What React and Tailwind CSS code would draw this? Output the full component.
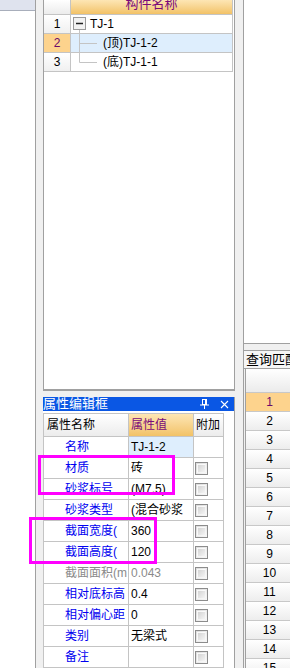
import React from 'react';

// 构件列表
const treeRows = [
  { no: 1, text: 'TJ-1', kind: 'root' },
  { no: 2, text: '(顶)TJ-1-2', kind: 'mid', active: true },
  { no: 3, text: '(底)TJ-1-1', kind: 'last' },
];

// 属性
const props = [
  { label: '名称', value: 'TJ-1-2', check: false, active: true },
  { label: '材质', value: '砖', check: true },
  { label: '砂浆标号', value: '(M7.5)', check: true },
  { label: '砂浆类型', value: '(混合砂浆', check: true },
  { label: '截面宽度(', value: '360', check: true },
  { label: '截面高度(', value: '120', check: true },
  { label: '截面面积(m', value: '0.043', check: true, muted: true },
  { label: '相对底标高', value: '0.4', check: true },
  { label: '相对偏心距', value: '0', check: true },
  { label: '类别', value: '无梁式', check: true },
  { label: '备注', value: '', check: true },
];

const matchRows = [1, 2, 3, 4, 5, 6, 7, 8, 9, 10, 11, 12, 13, 14, 15];

const TreeLine = ({ kind }) => {
  if (kind === 'root') {
    return (
      <svg width="13" height="18" viewBox="0 0 13 18" className="shrink-0">
        <line x1="6.5" y1="15" x2="6.5" y2="18" stroke="#c4c4c4" />
        <rect x="0.5" y="2.5" width="12" height="12" fill="#f2f2f2" stroke="#9a9a9a" />
        <line x1="3" y1="8.5" x2="10" y2="8.5" stroke="#222" strokeWidth="1.5" />
      </svg>
    );
  }
  return (
    <svg width="30" height="18" viewBox="0 0 30 18" className="shrink-0">
      <line x1="6.5" y1="0" x2="6.5" y2={kind === 'last' ? 9.5 : 18} stroke="#c4c4c4" />
      <line x1="6.5" y1="9.5" x2="24" y2="9.5" stroke="#c4c4c4" />
    </svg>
  );
};

const CheckBox = () => (
  <div className="w-[13px] h-[13px] border border-[#8c8c8c] bg-linear-to-br from-[#dcdcdc] to-[#f8f8f8] p-[1px]">
    <div className="w-full h-full border border-white/70 bg-linear-to-br from-[#d4d4d4] to-[#f4f4f4]" />
  </div>
);

const App = () => {
  return (
    <div className="relative flex w-[290px] h-[668px] overflow-hidden bg-white text-[12px] text-black font-['Liberation_Sans','Noto_Sans_CJK_SC',sans-serif]">
      {/* 左侧面板 */}
      <div className="w-[36px] shrink-0 flex flex-col border-r border-[#a0a0a0]">
        <div className="h-[11px] bg-[#dfe3ee] border-b border-[#a8aebb]" />
        <div className="flex-1 bg-white" />
      </div>
      <div className="w-[7px] shrink-0 bg-[#f0f0f0]" />

      {/* 中间 */}
      <div className="w-[192px] shrink-0 flex flex-col">
        <div className="h-[391px] shrink-0 bg-white border-l border-r border-b-2 border-[#a0a0a0]">
          <div className="w-[189px]">
            <div className="flex h-[15px] border-b border-[#c4c4c4]">
              <div className="w-[27px] border-r border-[#c4c4c4] bg-linear-to-b from-white to-[#ececec]" />
              <div className="w-[162px] border-r border-[#c4c4c4] bg-linear-to-b from-[#fde6b4] to-[#f2c266] flex items-end justify-center overflow-hidden">
                <span className="text-[13px] leading-[13px] text-[#7a0a7a] mb-[4px]">构件名称</span>
              </div>
            </div>
            {treeRows.map((r) => (
              <div key={r.no} className="flex h-[19px] border-b border-[#c4c4c4]">
                <div className={`w-[27px] border-r border-[#c4c4c4] flex items-center justify-center ${r.active ? 'bg-[#fdd38d] text-[#6a0a6a]' : 'bg-linear-to-b from-white to-[#f0f0f0]'}`}>
                  {r.no}
                </div>
                <div className={`w-[162px] border-r border-[#c4c4c4] flex items-center pl-[2px] ${r.active ? 'bg-[#deeefd]' : 'bg-white'}`}>
                  <TreeLine kind={r.kind} />
                  <span className={r.kind === 'root' ? 'ml-[4px]' : ''}>{r.text}</span>
                </div>
              </div>
            ))}
          </div>
        </div>
        <div className="h-[6px] shrink-0 bg-[#f0f0f0]" />

        {/* 属性编辑框 */}
        <div className="flex-1 flex flex-col bg-white border-r border-[#a0a0a0]">
          <div className="h-[14px] shrink-0 bg-[#0a57e4] text-white flex items-center pr-[5px]">
            <span className="text-[13px] leading-[14px]">属性编辑框</span>
            <svg width="10" height="10" viewBox="0 0 10 10" className="ml-auto mr-[10px]">
              <rect x="2.5" y="0.5" width="4" height="5" fill="none" stroke="white" />
              <line x1="5.5" y1="0.5" x2="5.5" y2="5.5" stroke="white" />
              <line x1="0" y1="6" x2="9" y2="6" stroke="white" />
              <line x1="4.5" y1="6" x2="4.5" y2="10" stroke="white" />
            </svg>
            <svg width="9" height="9" viewBox="0 0 9 9">
              <path d="M1 1L8 8M8 1L1 8" stroke="white" strokeWidth="1.1" />
            </svg>
          </div>
          <div className="mt-[2px] w-[181px] border-t border-l border-[#c4c4c4]">
            <div className="flex h-[23px] border-b border-[#c4c4c4]">
              <div className="w-[85px] border-r border-[#c4c4c4] bg-linear-to-b from-white to-[#ececec] flex items-center pl-[3px] text-[12px]">属性名称</div>
              <div className="w-[65px] border-r border-[#c4c4c4] bg-linear-to-b from-[#fde6b4] to-[#f2c266] flex items-center pl-[2px] text-[12px] text-[#7a0a7a]">属性值</div>
              <div className="w-[30px] border-r border-[#c4c4c4] bg-linear-to-b from-white to-[#ececec] flex items-center pl-[2px] text-[12px]">附加</div>
            </div>
            {props.map((p) => (
              <div key={p.label} className="flex h-[21px] border-b border-[#c4c4c4]">
                <div className={`w-[85px] border-r border-[#c4c4c4] flex items-center pl-[21px] whitespace-nowrap overflow-hidden text-[12px] ${p.muted ? 'text-[#8a8a8a]' : 'text-[#0000f0]'}`}>
                  {p.label}
                </div>
                <div className={`w-[65px] border-r border-[#c4c4c4] flex items-center pl-[2px] whitespace-nowrap overflow-hidden ${p.active ? 'bg-[#deeefd]' : 'bg-white'} ${p.muted ? 'text-[#8a8a8a]' : 'text-black'}`}>
                  {p.value}
                </div>
                <div className="w-[30px] border-r border-[#c4c4c4] flex items-center pl-[1px]">
                  {p.check && <CheckBox />}
                </div>
              </div>
            ))}
          </div>
        </div>
      </div>
      <div className="w-[8px] shrink-0 bg-[#f0f0f0]" />

      {/* 右侧 查询匹配 */}
      <div className="w-[47px] shrink-0 flex flex-col border-l border-[#a0a0a0]">
        <div className="h-[344px] shrink-0 bg-white border-b border-[#a0a0a0]" />
        <div className="h-[6px] shrink-0 bg-[#f0f0f0]" />
        <div className="h-[18px] shrink-0 border-t border-[#a0a0a0] bg-[#f6f6f6] flex items-center pl-[2px] text-[13px] whitespace-nowrap overflow-hidden">
          查询匹配
        </div>
        <div className="flex-1 border-t border-[#a0a0a0] bg-[#f0f0f0] pl-[1px]">
          <div className="h-full w-[48px] border-l border-[#a0a0a0] bg-white">
            <div className="h-[24px] border-b border-[#c8c8c8] bg-linear-to-b from-white to-[#ebebeb]" />
            {matchRows.map((n) => (
              <div
                key={n}
                className={`h-[19px] border-b border-[#c8c8c8] flex items-center justify-center ${n === 1 ? 'bg-[#fdd38d] text-[#6a0a6a]' : 'bg-linear-to-b from-white to-[#ededed]'}`}
              >
                {n}
              </div>
            ))}
          </div>
        </div>
      </div>

      {/* 标注框 */}
      <div className="absolute left-[38px] top-[455px] w-[137px] h-[40px] border-[3px] border-[#ff00ff]" />
      <div className="absolute left-[29px] top-[517px] w-[128px] h-[47px] border-[3px] border-[#ff00ff]" />
    </div>
  );
};

export default App;
